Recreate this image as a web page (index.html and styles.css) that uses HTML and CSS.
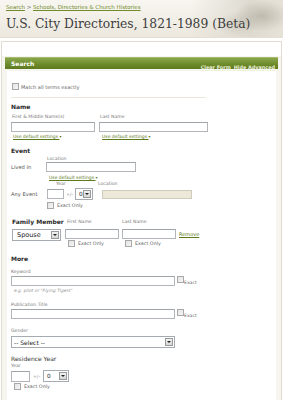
FILE: index.html
```html
<!DOCTYPE html>
<html lang="en">
<head>
  <meta charset="UTF-8" />
  <meta name="viewport" content="width=device-width, initial-scale=1.0"/>
  <title>U.S. City Directories, 1821-1989 (Beta)</title>
  <link rel="stylesheet" href="styles.css">
</head>
<body>

  <div class="page-head">
    <div class="crumbs"><a href="#">Search</a> &gt; <a href="#">Schools, Directories &amp; Church Histories</a></div>
    <h1>U.S. City Directories, 1821-1989 (Beta)</h1>
  </div>

  <div class="frame">
    <div class="panel">
      <div class="bar">
        <span class="bar-title">Search</span>
        <span class="bar-links"><a href="#">Clear Form</a><a href="#">Hide Advanced</a></span>
      </div>

      <div class="panel-body">
        <div class="form">

          <div class="check match"><span class="cb"></span>Match all terms exactly</div>
          <div class="rule"></div>

          <!-- Name -->
          <h3 class="sec name-sec">Name</h3>
          <div class="row">
            <div class="col first-col">
              <div class="hint">First &amp; Middle Name(s)</div>
              <span class="input first-name"></span>
              <a class="defaults" href="#">Use default settings <span class="caret">▾</span></a>
            </div>
            <div class="col last-col">
              <div class="hint">Last Name</div>
              <span class="input last-name"></span>
              <a class="defaults" href="#">Use default settings <span class="caret">▾</span></a>
            </div>
          </div>

          <!-- Event -->
          <h3 class="sec event-sec">Event</h3>
          <div class="hint loc-hint">Location</div>
          <div class="row lived-row">
            <span class="row-label">Lived In</span>
            <span class="input lived"></span>
          </div>
          <a class="defaults lived-defaults" href="#">Use default settings <span class="caret">▾</span></a>
          <div class="row any-hints">
            <span class="hint year-hint">Year</span>
            <span class="hint">Location</span>
          </div>
          <div class="row any-row">
            <span class="row-label">Any Event</span>
            <span class="input year"></span>
            <span class="pm">+/-</span>
            <span class="select range"><span class="val">0</span><span class="btn"></span></span>
            <span class="input disabled any-loc"></span>
          </div>
          <div class="check exact any-exact"><span class="cb"></span>Exact Only</div>

          <!-- Family member -->
          <div class="row fam-head">
            <h3 class="sec fam-title">Family Member</h3>
            <span class="hint fam-first">First Name</span>
            <span class="hint">Last Name</span>
          </div>
          <div class="row fam-row">
            <span class="select spouse"><span class="val">Spouse</span><span class="btn"></span></span>
            <div class="col">
              <span class="input fam-name"></span>
              <div class="check exact"><span class="cb"></span>Exact Only</div>
            </div>
            <div class="col">
              <span class="input fam-name"></span>
              <div class="check exact"><span class="cb"></span>Exact Only</div>
            </div>
            <a class="remove" href="#">Remove</a>
          </div>

          <!-- More -->
          <h3 class="sec more-sec">More</h3>
          <div class="hint keyword-hint">Keyword</div>
          <div class="row wide-row">
            <span class="input wide"></span>
            <span class="cb"></span><span class="exact-word">Exact</span>
          </div>
          <div class="example">e.g. pilot or "Flying Tigers"</div>

          <div class="hint pub-hint">Publication Title</div>
          <div class="row wide-row">
            <span class="input wide"></span>
            <span class="cb"></span><span class="exact-word">Exact</span>
          </div>

          <div class="hint gender-hint">Gender</div>
          <span class="select gender"><span class="val">-- Select --</span><span class="btn"></span></span>

          <div class="res-title">Residence Year</div>
          <div class="hint res-hint">Year</div>
          <div class="row res-row">
            <span class="input res-year"></span>
            <span class="pm">+/-</span>
            <span class="select res-range"><span class="val">0</span><span class="btn"></span></span>
          </div>
          <div class="check exact res-exact"><span class="cb"></span>Exact Only</div>

        </div>
      </div>
    </div>
  </div>

</body>
</html>
```

FILE: styles.css
```css
* {
  box-sizing: border-box;
}

body {
  margin: 0;
  font-family: 'DejaVu Sans', Verdana, sans-serif;
  color: #444;
  background: #fff;
  width: 283px;
  height: 400px;
  overflow: hidden;
}

a {
  color: #5b7a1c;
}

/* page header */
.page-head {
  height: 38px;
  padding: 4px 6px 0;
  border-bottom: 1px solid #e3dfd3;
  background:
    radial-gradient(ellipse 40px 22px at 262px 16px, rgba(150,145,130,0.45), rgba(150,145,130,0) 70%),
    radial-gradient(ellipse 30px 18px at 238px 24px, rgba(170,165,150,0.3), rgba(170,165,150,0) 70%),
    linear-gradient(to right, rgba(236,233,224,0) 190px, #dedad0 250px, #e6e2d8 283px),
    linear-gradient(#f8f6f1, #ece8de);
}

.crumbs {
  font-size: 5.5px;
  line-height: 7px;
  color: #777;
}

.crumbs a {
  color: #6f8c2c;
}

h1 {
  margin: 5px 0 0;
  font-family: 'DejaVu Serif', Georgia, serif;
  font-size: 12.3px;
  font-weight: normal;
  line-height: 16px;
  color: #3e3e3e;
}

/* outer frame */
.frame {
  margin: 3px 1px 0 1px;
  padding: 15px 3px 0 3px;
  border-top: 1px solid #e0dcd0;
  border-left: 1px solid #e0dcd0;
  border-right: 1px solid #e0dcd0;
  height: 362px;
  background: linear-gradient(#fff 14px, #f7f5ef 14px);
}

.bar {
  height: 12px;
  padding: 0 3px 0 6px;
  display: flex;
  align-items: center;
  justify-content: space-between;
  background: linear-gradient(#8aa64a, #6c8a2a 60%, #5d7a1f);
  border-top: 1px solid #a4bb70;
}

.bar-title {
  font-size: 6px;
  font-weight: bold;
  color: #fff;
}

.bar-links a {
  font-size: 4.9px;
  font-weight: bold;
  color: #eef3dc;
  margin-left: 3px;
}

.panel-body {
  padding: 2px 2px 0 2px;
  background: #f7f5ef;
}

.form {
  background: #fff;
  height: 330px;
  padding: 12px 0 0 4px;
}

/* text bits */
.hint {
  font-size: 4.6px;
  line-height: 6px;
  color: #777;
}

.sec {
  margin: 0;
  font-size: 6px;
  line-height: 6px;
  color: #2a2a2a;
}

.row {
  display: flex;
}

.col {
  display: flex;
  flex-direction: column;
}

.row-label {
  width: 35px;
  font-size: 5.2px;
  color: #555;
}

.input {
  display: block;
  height: 10px;
  border: 1px solid #b2b6ba;
  border-top-color: #9fa4a8;
  background: #fff;
}

.input.disabled {
  background: #ece9d8;
  border-color: #cfccbe;
}

.cb {
  display: inline-block;
  width: 6px;
  height: 7px;
  border: 1px solid #a8a8a8;
  background: linear-gradient(135deg, #e4e4e4, #f6f6f6);
}

.check {
  display: flex;
  align-items: center;
  font-size: 4.8px;
  color: #666;
}

.check .cb {
  margin-right: 3px;
}

.defaults {
  font-size: 4.5px;
  line-height: 6px;
}

.caret {
  text-decoration: none;
  display: inline-block;
  font-size: 4px;
}

.select {
  display: flex;
  align-items: center;
  justify-content: space-between;
  height: 12px;
  padding: 0 1px 0 4px;
  border: 1px solid #a5abb0;
  background: #fff;
  font-size: 5.8px;
  color: #222;
}

.select .btn {
  position: relative;
  width: 8px;
  height: 8px;
  border: 1px solid #9a9a9a;
  background: linear-gradient(#f2f2f2, #d6d6d6);
}

.select .btn::after {
  content: "";
  position: absolute;
  left: 1px;
  top: 2px;
  border-left: 2px solid transparent;
  border-right: 2px solid transparent;
  border-top: 2px solid #222;
}

.pm {
  font-size: 4.6px;
  color: #888;
}

/* top check + rule */
.match {
  height: 7px;
  margin-left: 1px;
  font-size: 5px;
}

.match .cb {
  width: 7px;
  margin-right: 2px;
}

.rule {
  margin-top: 7px;
  width: 195px;
  height: 1px;
  background: #ebe7da;
}

/* name */
.name-sec {
  margin-top: 6px;
}

.first-col .hint,
.last-col .hint {
  margin-top: 4px;
  margin-left: 1px;
}

.first-col .input,
.last-col .input {
  margin-top: 2px;
}

.first-name {
  width: 84px;
}

.last-col {
  margin-left: 4px;
}

.last-name {
  width: 109px;
}

.first-col .defaults {
  margin: 2px 0 0 2px;
}

.last-col .defaults {
  margin: 2px 0 0 3px;
}

/* event */
.event-sec {
  margin-top: 8px;
}

.loc-hint {
  margin: 2px 0 0 36px;
}

.lived-row {
  align-items: center;
}

.lived {
  width: 90px;
}

.lived-defaults {
  display: block;
  margin: 3px 0 0 38px;
}

.any-hints {
  margin-left: 45px;
}

.year-hint {
  width: 42px;
}

.any-row {
  margin-top: 1px;
  align-items: center;
}

.year {
  width: 17px;
  margin-left: 1px;
}

.any-row .pm {
  margin: 0 2px 0 2px;
}

.range {
  width: 18px;
  padding-left: 3px;
}

.any-loc {
  width: 90px;
  height: 9px;
  margin-left: 9px;
}

.exact .cb {
  width: 7px;
  height: 7px;
}

.any-exact {
  margin: 2px 0 0 36px;
}

/* family member */
.fam-head {
  margin-top: 10px;
  align-items: center;
}

.fam-title {
  width: 55px;
  margin-left: 1px;
}

.fam-first {
  width: 55px;
}

.fam-row {
  margin-top: 4px;
  margin-left: 1px;
}

.spouse {
  width: 49px;
  margin-right: 4px;
  font-size: 6.5px;
}

.fam-row .col {
  margin-right: 3px;
}

.fam-name {
  width: 54px;
}

.fam-row .check {
  margin: 1px 0 0 3px;
}

.remove {
  margin-top: 2px;
  font-size: 5px;
}

/* more */
.more-sec {
  margin-top: 9px;
}

.keyword-hint {
  margin-top: 7px;
}

.wide-row {
  margin-top: 1px;
  align-items: flex-start;
}

.wide {
  width: 164px;
}

.wide-row .cb {
  width: 7px;
  margin-left: 2px;
}

.exact-word {
  margin-top: 4px;
  font-size: 4.6px;
  color: #666;
}

.example {
  margin: 2px 0 0 3px;
  font-size: 4.4px;
  line-height: 6px;
  font-style: italic;
  color: #999;
}

.pub-hint {
  margin-top: 8px;
}

.gender-hint {
  margin-top: 9px;
}

.gender {
  width: 164px;
  margin-top: 2px;
  font-size: 6px;
  padding-left: 2px;
}

.res-title {
  margin-top: 7px;
  font-size: 6px;
  line-height: 7px;
  color: #333;
}

.res-hint {
  margin-top: 1px;
}

.res-row {
  margin-top: 1px;
  align-items: center;
}

.res-year {
  width: 19px;
  height: 11px;
}

.res-row .pm {
  margin: 0 3px 0 3px;
}

.res-range {
  width: 26px;
  padding-left: 3px;
}

.res-exact {
  margin: 1px 0 0 3px;
}
```
